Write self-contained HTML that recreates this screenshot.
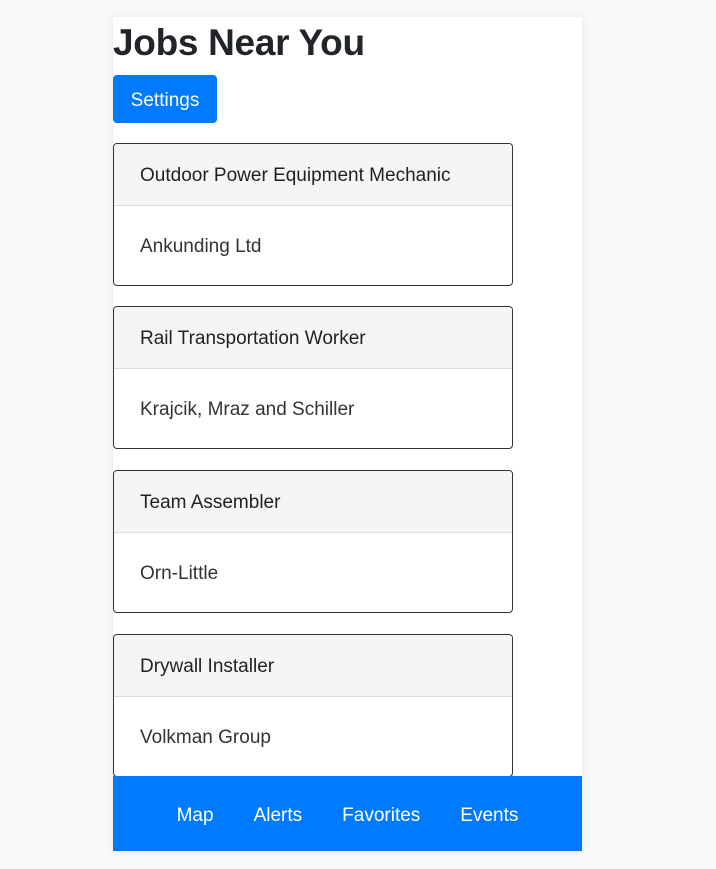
<!DOCTYPE html>
<html><head><style>
body{margin:0;background:#f9f9f9;font-family:"Liberation Sans",sans-serif;}
.c{position:absolute;left:113px;top:17px;width:469px;height:834px;background:#fff;box-shadow:0 0 8px rgba(0,0,0,.08);overflow:hidden}
h1{position:absolute;left:0;top:5px;margin:0;font-size:37px;font-weight:bold;color:#212529;letter-spacing:-0.3px}
.btn{position:absolute;left:0;top:58px;width:104px;height:48px;background:#007bff;color:#fff;border-radius:4px;font-size:19px;line-height:51px;text-align:center}
.card{position:absolute;left:0;width:398px;height:141px;border:1px solid #333;border-radius:4px;overflow:hidden}
.hd{height:61px;background:#f5f5f5;border-bottom:1px solid #ddd;padding-left:26px;line-height:64px;font-size:19px;color:#222}
.bd{padding-left:26px;line-height:82px;font-size:19px;color:#333}
.nav{position:absolute;left:0;top:759px;width:469px;height:75px;background:#007bff;color:#fff;font-size:19px;text-align:center;line-height:80px}
.nav span{margin:0 20px}
</style></head><body>
<div class="c">
<h1>Jobs Near You</h1>
<div class="btn">Settings</div>
<div class="card" style="top:126px"><div class="hd">Outdoor Power Equipment Mechanic</div><div class="bd">Ankunding Ltd</div></div>
<div class="card" style="top:289px"><div class="hd">Rail Transportation Worker</div><div class="bd">Krajcik, Mraz and Schiller</div></div>
<div class="card" style="top:453px"><div class="hd">Team Assembler</div><div class="bd">Orn-Little</div></div>
<div class="card" style="top:617px"><div class="hd">Drywall Installer</div><div class="bd">Volkman Group</div></div>
<div class="nav"><span>Map</span><span>Alerts</span><span>Favorites</span><span>Events</span></div>
</div>
</body></html>
